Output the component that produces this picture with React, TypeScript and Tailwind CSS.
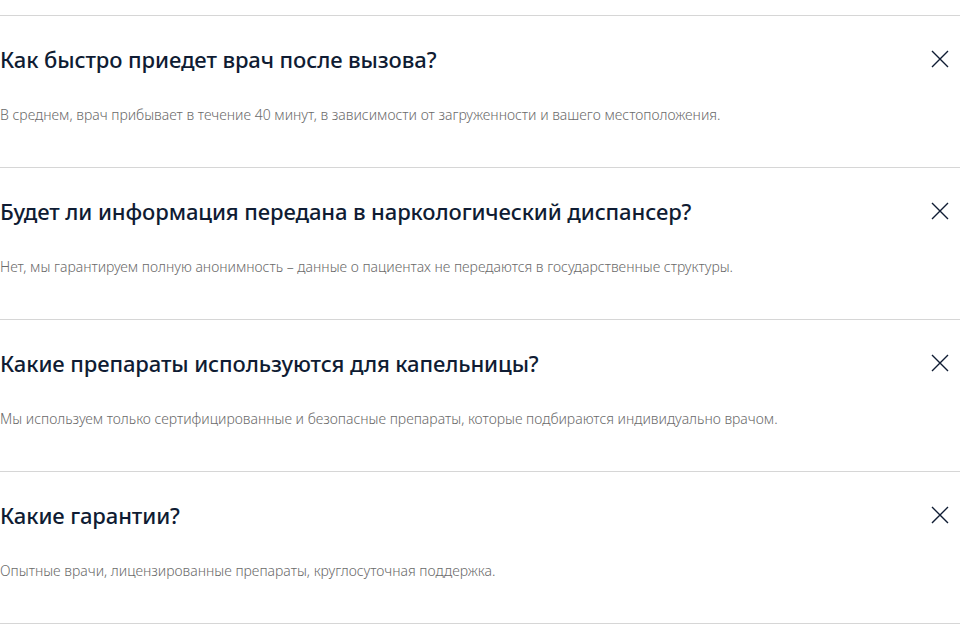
const faqs = [
  {
    q: "Как быстро приедет врач после вызова?",
    a: "В среднем, врач прибывает в течение 40 минут, в зависимости от загруженности и вашего местоположения.",
  },
  {
    q: "Будет ли информация передана в наркологический диспансер?",
    a: "Нет, мы гарантируем полную анонимность – данные о пациентах не передаются в государственные структуры.",
  },
  {
    q: "Какие препараты используются для капельницы?",
    a: "Мы используем только сертифицированные и безопасные препараты, которые подбираются индивидуально врачом.",
  },
  {
    q: "Какие гарантии?",
    a: "Опытные врачи, лицензированные препараты, круглосуточная поддержка.",
  },
];

function CloseIcon() {
  return (
    <svg width="18" height="18" viewBox="0 0 18 18" className="text-[#0f1c33]">
      <path d="M1 1L17 17M17 1L1 17" stroke="currentColor" strokeWidth="1.4" />
    </svg>
  );
}

export default function App() {
  return (
    <div className="w-[960px] bg-white pt-[15px] font-['Noto_Sans',sans-serif]">
      {faqs.map((f) => (
        <div key={f.q} className="border-t border-[#d6d6d6] pt-[29px] pb-[42px]">
          <div className="flex items-center justify-between pr-[11px]">
            <h3 className="text-[22px] leading-[28px] font-medium tracking-[-0.1px] text-[#0f1c33]">{f.q}</h3>
            <CloseIcon />
          </div>
          <p className="mt-[32px] text-[14px] leading-[20px] font-light text-[#6a6a6a]">{f.a}</p>
        </div>
      ))}
      <div className="border-t border-[#d6d6d6] h-[12px]" />
    </div>
  );
}
